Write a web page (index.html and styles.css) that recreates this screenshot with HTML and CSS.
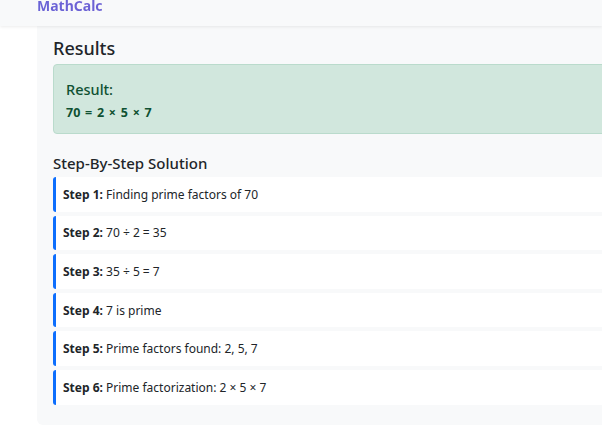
FILE: index.html
```html
<html>
  <head>
<link rel="stylesheet" href="styles.css">
  </head>
  <body>
    <nav class="navbar">
      <span class="brand">MathCalc</span>
    </nav>
    <div class="results-card">
      <h2>Results</h2>
      <div class="alert-success">
        <h4>Result:</h4>
        <p class="answer">70 = 2 × 5 × 7</p>
      </div>
      <h5>Step-By-Step Solution</h5>
      <div class="steps">
        <div class="step"><b>Step 1:</b> Finding prime factors of 70</div>
        <div class="step"><b>Step 2:</b> 70 ÷ 2 = 35</div>
        <div class="step"><b>Step 3:</b> 35 ÷ 5 = 7</div>
        <div class="step"><b>Step 4:</b> 7 is prime</div>
        <div class="step"><b>Step 5:</b> Prime factors found: 2, 5, 7</div>
        <div class="step"><b>Step 6:</b> Prime factorization: 2 × 5 × 7</div>
      </div>
    </div>
  </body>
</html>
```
FILE: styles.css
```css
html{
  overflow: hidden;
}
body{
  margin: 0;
  background: #fff;
  color: #212529;
  font-family: "Noto Sans", sans-serif;
}
.navbar{
  height: 27px;
  background: #f8f9fa;
  box-shadow: 0 1px 3px rgba(0, 0, 0, 0.08);
  padding-left: 37px;
  position: relative;
}
.brand{
  display: block;
  font-size: 14px;
  font-weight: 700;
  line-height: 14px;
  margin-top: -1px;
  background: linear-gradient(90deg, #6a63d6, #7b52c6);
  -webkit-background-clip: text;
  color: transparent;
}
.results-card{
  margin-left: 37px;
  width: 600px;
  background: #f8f9fa;
  border-radius: 0 0 6px 6px;
  padding: 10px 16px 20px;
}
h2{
  margin: 0 0 4px;
  font-size: 18px;
  font-weight: 500;
  line-height: 24px;
}
.alert-success{
  background: #d1e7dd;
  border: 1px solid #badbcc;
  color: #0f5132;
  border-radius: 4px;
  padding: 12px 12px;
  height: 44px;
}
.alert-success h4{
  margin: 0 0 4px;
  font-size: 14.5px;
  font-weight: 500;
  line-height: 24px;
}
.answer{
  margin: 0;
  font-size: 12.5px;
  font-weight: 700;
  line-height: 16px;
  word-spacing: 1.5px;
}
h5{
  margin: 19px 0 4px;
  font-size: 15px;
  font-weight: 500;
  line-height: 20px;
}
.steps{
  display: flex;
  flex-direction: column;
  gap: 4px;
}
.step{
  background: #fff;
  border-left: 3px solid #0d6efd;
  border-radius: 3px 0 0 3px;
  height: 34.6px;
  padding-left: 7px;
  display: flex;
  align-items: center;
  font-size: 12px;
  white-space: pre;
}
```
